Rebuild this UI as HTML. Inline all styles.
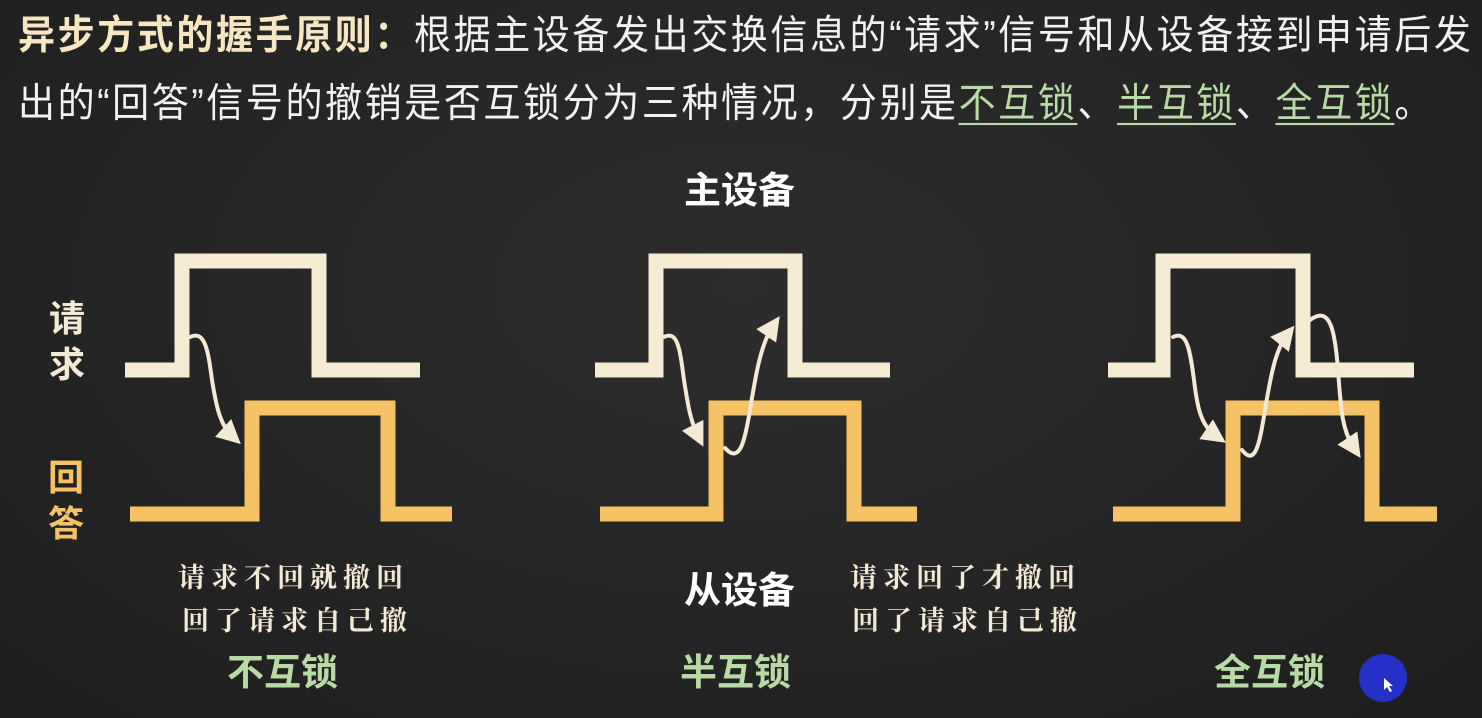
<!DOCTYPE html>
<html><head><meta charset="utf-8"><style>
html,body{margin:0;padding:0}
body{width:1482px;height:718px;background:#262626;overflow:hidden;position:relative;font-family:"Liberation Sans","Noto Sans CJK SC",sans-serif;}
.t{position:absolute;white-space:nowrap}
.h{left:18px;font-size:37px;color:#f2f2f2;letter-spacing:2.6px;transform:scaleY(1.08);transform-origin:left top}
.g{color:#b8dba6;text-decoration:underline;text-decoration-color:#b8dba6;text-underline-offset:6px;text-decoration-thickness:2px}
.b{font-weight:bold}
.hw{font-family:"Noto Serif CJK SC",serif;font-size:27px;font-weight:bold;color:#f3ead6;letter-spacing:6px}
.gl{font-size:37px;font-weight:bold;color:#b8dba6}
</style></head><body>
<div style="position:absolute;inset:0;background:radial-gradient(ellipse at 50% 40%,#2d2d2d,#1e1e1e)"></div>
<div class="t h" style="top:2px"><span class="b" style="color:#f6e6c2">异步方式的握手原则：</span>根据主设备发出交换信息的“请求”信号和从设备接到申请后发</div>
<div class="t h" style="top:70px">出的“回答”信号的撤销是否互锁分为三种情况，分别是<span class="g">不互锁</span>、<span class="g">半互锁</span>、<span class="g">全互锁</span>。</div>

<div class="t b" style="left:49px;top:296px;font-size:36px;color:#f3ead6;line-height:46px">请<br>求</div>
<div class="t b" style="left:48px;top:455px;font-size:36px;color:#f5c266;line-height:46px">回<br>答</div>
<div class="t b" style="left:684px;top:160px;font-size:37px;color:#fff">主设备</div>
<div class="t b" style="left:684px;top:560px;font-size:37px;color:#fff">从设备</div>

<div class="t hw" style="left:178px;top:556px">请求不回就撤回</div>
<div class="t hw" style="left:182px;top:599px">回了请求自己撤</div>
<div class="t hw" style="left:850px;top:556px">请求回了才撤回</div>
<div class="t hw" style="left:852px;top:599px">回了请求自己撤</div>

<div class="t gl" style="left:227px;top:642px">不互锁</div>
<div class="t gl" style="left:680px;top:642px">半互锁</div>
<div class="t gl" style="left:1214px;top:642px">全互锁</div>

<svg width="1482" height="718" style="position:absolute;left:0;top:0">
<defs><marker id="a" markerWidth="6" markerHeight="6" refX="3" refY="3" orient="auto" markerUnits="strokeWidth"><path d="M0,0 L6,3 L0,6 Z" fill="#f3ead6"/></marker></defs>
<g fill="none" stroke-width="15" stroke-linejoin="miter" stroke-linecap="butt">
<path d="M125 370 H182 V261 H319 V370 H420" stroke="#f6ebd3"/>
<path d="M130 514 H252 V408 H388 V514 H452" stroke="#f5c266"/>
<path d="M595 370 H656 V261 H795 V370 H890" stroke="#f6ebd3"/>
<path d="M600 514 H716 V408 H854 V514 H917" stroke="#f5c266"/>
<path d="M1108 370 H1163 V261 H1303 V370 H1414" stroke="#f6ebd3"/>
<path d="M1113 514 H1233 V408 H1372 V514 H1437" stroke="#f5c266"/>
</g>
<g fill="none" stroke="#f3ead6" stroke-width="4" stroke-linecap="round">
<path d="M190 337 C205 330 208 350 212 380 C216 405 220 425 232 436" marker-end="url(#a)"/>
<path d="M664 337 C678 330 680 350 684 380 C688 405 690 420 698 436" marker-end="url(#a)"/>
<path d="M725 448 C740 465 745 440 750 410 C755 380 760 345 773 326" marker-end="url(#a)"/>
<path d="M1173 337 C1187 330 1190 350 1194 380 C1197 405 1200 425 1216 436" marker-end="url(#a)"/>
<path d="M1242 450 C1256 468 1260 440 1265 410 C1270 380 1275 350 1287 335" marker-end="url(#a)"/>
<path d="M1310 320 C1330 305 1335 330 1338 370 C1341 410 1342 430 1354 448" marker-end="url(#a)"/>
</g>
<circle cx="1383" cy="678" r="24" fill="#2430c8"/>
<path d="M1384 678 l0 12 l3 -3 l3 5 l2 -1 l-3 -5 l4 0 z" fill="#fff"/>
</svg>
</body></html>
